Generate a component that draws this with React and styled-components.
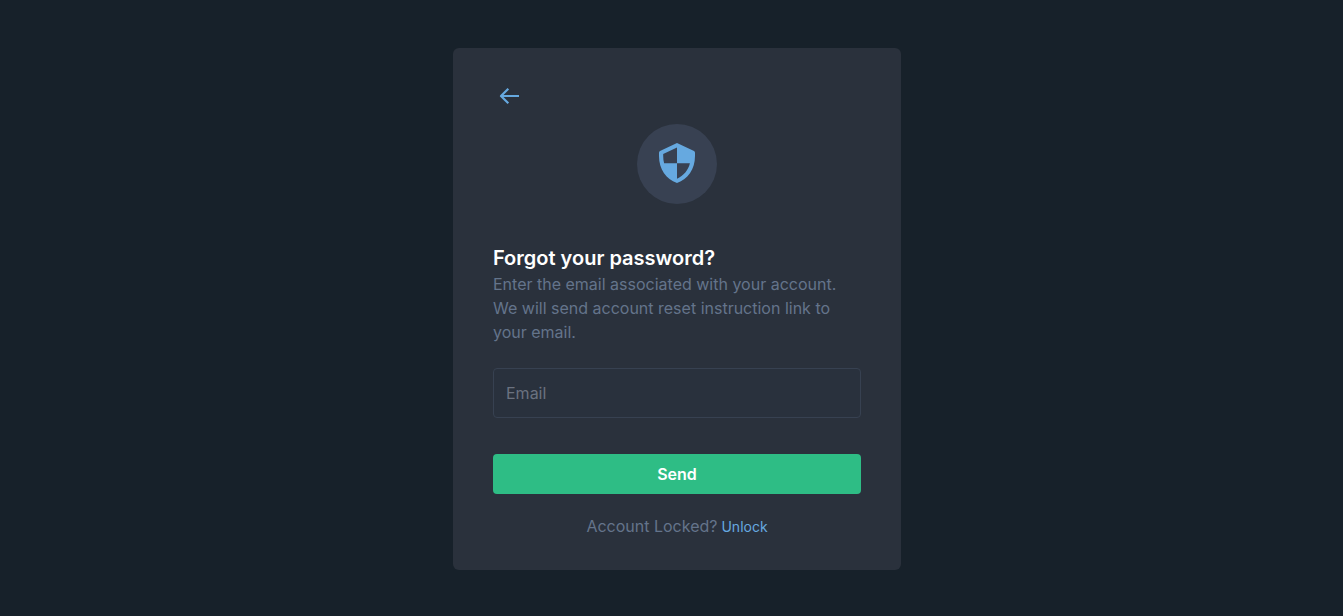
import React from "react";
import styled, { createGlobalStyle } from "styled-components";

const GlobalStyle = createGlobalStyle`
  *, *::before, *::after { box-sizing: border-box; }
  body {
    margin: 0;
    background: #17212a;
    color: #64748b;
    font-family: Inter, "Liberation Sans", sans-serif;
    font-size: 16px;
    line-height: 24px;
  }
`;

const Page = styled.main`
  display: flex;
  justify-content: center;
  align-items: center;
  min-height: 100vh;
  padding: 48px 0 46px 11px;
`;

const Card = styled.section`
  width: 100%;
  max-width: 448px;
  padding: 32px 40px;
  border-radius: 6px;
  background: #2a313c;
`;

const BackButton = styled.button`
  display: flex;
  align-items: center;
  justify-content: center;
  width: 32px;
  height: 32px;
  padding: 0;
  border: 0;
  background: none;
  color: #66a9e0;
  cursor: pointer;
`;

const Badge = styled.div`
  display: flex;
  align-items: center;
  justify-content: center;
  width: 80px;
  height: 80px;
  margin: 12px auto 40px;
  border-radius: 50%;
  background: #384152;
  color: #66a9e0;
`;

const Title = styled.h1`
  margin: 0;
  color: #fff;
  font-size: 20px;
  font-weight: 600;
  line-height: 28px;
`;

const Description = styled.p`
  margin: 0 0 24px;
`;

const EmailInput = styled.input`
  display: block;
  width: 100%;
  height: 50px;
  padding: 0 12px;
  border: 1px solid #374151;
  border-radius: 4px;
  background: #29313d;
  color: #fff;
  font: inherit;
  &::placeholder { color: #6b7280; opacity: 1; }
`;

const SendButton = styled.button`
  display: block;
  width: 100%;
  height: 40px;
  margin: 36px 0 20px;
  border: 0;
  border-radius: 4px;
  background: #2ebd85;
  color: #fff;
  font: inherit;
  font-weight: 600;
  cursor: pointer;
`;

const Footer = styled.p`
  display: flex;
  justify-content: center;
  align-items: baseline;
  gap: 4px;
  margin: 0;
`;

const UnlockLink = styled.a`
  color: #66a9e0;
  font-size: 14px;
  line-height: 20px;
  text-decoration: none;
`;

export default function App() {
  return (
    <>
      <GlobalStyle />
      <Page>
        <Card>
          <BackButton type="button" aria-label="Back">
            <svg width="24" height="24" viewBox="0 0 24 24" fill="none" stroke="currentColor" strokeWidth="2.2" strokeLinejoin="round" aria-hidden="true">
              <path d="M22 12H4M11.300 4.700L4 12L11.300 19.300" />
            </svg>
          </BackButton>
          <Badge>
            <svg width="48" height="48" viewBox="0 0 48 48" fill="currentColor" fillRule="evenodd" aria-hidden="true">
              <path d="M24 3L41 11Q42 11.500 42 12.700V16C42 29 35 39 24 43C13 39 6 29 6 16V12.700Q6 11.500 7 11ZM24 7.500L10.200 14V16C10.200 18.500 10.500 21 11.100 23.200H24ZM24 23.200V38.700C30.500 35.700 35.500 30 36.900 23.200Z" />
            </svg>
          </Badge>
          <Title>Forgot your password?</Title>
          <Description>
            Enter the email associated with your account. We will send account reset instruction link to your email.
          </Description>
          <form onSubmit={(event) => event.preventDefault()}>
            <EmailInput type="email" name="email" placeholder="Email" aria-label="Email" />
            <SendButton type="submit">Send</SendButton>
          </form>
          <Footer>
            <span>Account Locked?</span>
            <UnlockLink href="#unlock">Unlock</UnlockLink>
          </Footer>
        </Card>
      </Page>
    </>
  );
}
